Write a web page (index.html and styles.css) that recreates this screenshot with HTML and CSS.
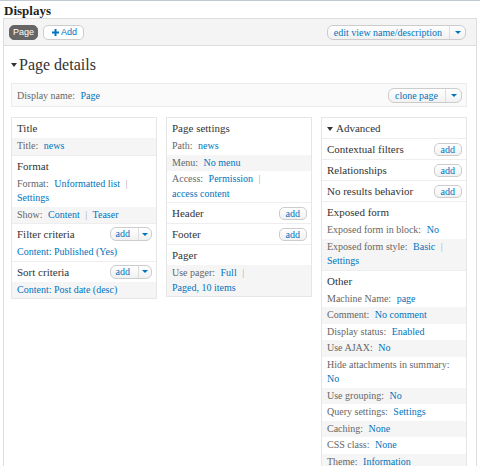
FILE: index.html
```html
<!DOCTYPE html>
<html lang="en">

<head>
    <meta charset="UTF-8">
    <title>Displays</title>
    <link rel="stylesheet" href="styles.css">
</head>

<body>

    <div id="page">
        <h2 class="displays-title">Displays</h2>

        <div class="displays">
            <!-- display tabs -->
            <div class="tabs">
                <a class="tab active" href="javascript:void(0)">Page</a>
                <a class="tab add-display" href="javascript:void(0)">
                    <svg width="7" height="7" viewBox="0 0 7 7"><path d="M2.5 0h2v2.5H7v2H4.5V7h-2V4.5H0v-2h2.5z" fill="#0074bd" /></svg>Add
                </a>
                <div class="dropbutton tabs-menu">
                    <a href="javascript:void(0)">edit view name/description</a>
                    <span class="toggle"><i class="caret"></i></span>
                </div>
            </div>

            <div class="display-body">
                <h3 class="details-title"><i class="arrow"></i>Page details</h3>

                <div class="display-name">
                    <span><span class="label">Display name:</span> <a href="javascript:void(0)">Page</a></span>
                    <div class="dropbutton">
                        <a href="javascript:void(0)">clone page</a>
                        <span class="toggle"><i class="caret"></i></span>
                    </div>
                </div>

                <div class="columns">
                    <!-- first column -->
                    <div class="column">
                        <div class="section">
                            <div class="section-head">Title</div>
                            <div class="row alt"><span class="label">Title:</span> <a href="javascript:void(0)">news</a></div>
                        </div>
                        <div class="section">
                            <div class="section-head">Format</div>
                            <div class="row"><span class="label">Format:</span> <a href="javascript:void(0)">Unformatted list</a> <span class="sep">|</span> <a href="javascript:void(0)">Settings</a></div>
                            <div class="row alt"><span class="label">Show:</span> <a href="javascript:void(0)">Content</a> <span class="sep">|</span> <a href="javascript:void(0)">Teaser</a></div>
                        </div>
                        <div class="section">
                            <div class="section-head">Filter criteria
                                <div class="dropbutton small">
                                    <a href="javascript:void(0)">add</a>
                                    <span class="toggle"><i class="caret"></i></span>
                                </div>
                            </div>
                            <div class="row"><a href="javascript:void(0)">Content: Published (Yes)</a></div>
                        </div>
                        <div class="section">
                            <div class="section-head">Sort criteria
                                <div class="dropbutton small">
                                    <a href="javascript:void(0)">add</a>
                                    <span class="toggle"><i class="caret"></i></span>
                                </div>
                            </div>
                            <div class="row alt"><a href="javascript:void(0)">Content: Post date (desc)</a></div>
                        </div>
                    </div>

                    <!-- second column -->
                    <div class="column">
                        <div class="section">
                            <div class="section-head">Page settings</div>
                            <div class="row"><span class="label">Path:</span> <a href="javascript:void(0)">news</a></div>
                            <div class="row alt"><span class="label">Menu:</span> <a href="javascript:void(0)">No menu</a></div>
                            <div class="row"><span class="label">Access:</span> <a href="javascript:void(0)">Permission</a> <span class="sep">|</span> <a href="javascript:void(0)">access content</a></div>
                        </div>
                        <div class="section">
                            <div class="section-head">Header <a class="add-btn" href="javascript:void(0)">add</a></div>
                        </div>
                        <div class="section">
                            <div class="section-head">Footer <a class="add-btn" href="javascript:void(0)">add</a></div>
                        </div>
                        <div class="section">
                            <div class="section-head">Pager</div>
                            <div class="row alt"><span class="label">Use pager:</span> <a href="javascript:void(0)">Full</a> <span class="sep">|</span> <a href="javascript:void(0)">Paged, 10 items</a></div>
                        </div>
                    </div>

                    <!-- third column -->
                    <div class="column">
                        <div class="section">
                            <div class="section-head advanced"><span><i class="arrow small"></i>Advanced</span></div>
                        </div>
                        <div class="section">
                            <div class="section-head">Contextual filters <a class="add-btn" href="javascript:void(0)">add</a></div>
                        </div>
                        <div class="section">
                            <div class="section-head">Relationships <a class="add-btn" href="javascript:void(0)">add</a></div>
                        </div>
                        <div class="section">
                            <div class="section-head">No results behavior <a class="add-btn" href="javascript:void(0)">add</a></div>
                        </div>
                        <div class="section">
                            <div class="section-head">Exposed form</div>
                            <div class="row"><span class="label">Exposed form in block:</span> <a href="javascript:void(0)">No</a></div>
                            <div class="row alt"><span class="label">Exposed form style:</span> <a href="javascript:void(0)">Basic</a> <span class="sep">|</span> <a href="javascript:void(0)">Settings</a></div>
                        </div>
                        <div class="section">
                            <div class="section-head">Other</div>
                            <div class="row"><span class="label">Machine Name:</span> <a href="javascript:void(0)">page</a></div>
                            <div class="row alt"><span class="label">Comment:</span> <a href="javascript:void(0)">No comment</a></div>
                            <div class="row"><span class="label">Display status:</span> <a href="javascript:void(0)">Enabled</a></div>
                            <div class="row alt"><span class="label">Use AJAX:</span> <a href="javascript:void(0)">No</a></div>
                            <div class="row"><span class="label">Hide attachments in summary:</span> <a href="javascript:void(0)">No</a></div>
                            <div class="row alt"><span class="label">Use grouping:</span> <a href="javascript:void(0)">No</a></div>
                            <div class="row"><span class="label">Query settings:</span> <a href="javascript:void(0)">Settings</a></div>
                            <div class="row alt"><span class="label">Caching:</span> <a href="javascript:void(0)">None</a></div>
                            <div class="row"><span class="label">CSS class:</span> <a href="javascript:void(0)">None</a></div>
                            <div class="row alt"><span class="label">Theme:</span> <a href="javascript:void(0)">Information</a></div>
                        </div>
                    </div>
                </div>
            </div>
        </div>
    </div>

</body>

</html>
```

FILE: styles.css
```css
* {
    margin: 0;
    padding: 0;
    box-sizing: border-box;
}

html,
body {
    overflow: hidden;
}

body {
    font-family: "Liberation Serif", "Times New Roman", serif;
    font-size: 10px;
    color: #666;
    background: #fff;
}

a {
    color: #0074bd;
    text-decoration: none;
}

#page {
    border-top: 1px solid #c4cad4;
}

.displays-title {
    height: 17px;
    padding: 2px 0 0 4px;
    font-size: 13px;
    line-height: 16px;
    font-weight: bold;
    color: #222;
}

.displays {
    margin: 0 3px;
    min-height: 500px;
    border: 1px solid #ddd;
}

/* tabs bar */
.tabs {
    display: flex;
    align-items: center;
    gap: 5px;
    height: 27px;
    padding: 0 10px 0 5px;
    background: #f4f4f4;
    border-bottom: 1px solid #ddd;
}

.tab {
    display: inline-flex;
    align-items: center;
    height: 15px;
    padding: 0 3px;
    font-family: "Liberation Sans", Arial, sans-serif;
    font-size: 9px;
    border: 1px solid #ccc;
    border-radius: 5px;
    background: #fff;
}

.tab.active {
    color: #fff;
    background: #666;
    border-color: #666;
}

.add-display {
    gap: 2px;
    padding: 0 6px 0 8px;
}

.tabs-menu {
    margin-left: auto;
}

/* split buttons */
.dropbutton {
    display: inline-flex;
    align-items: stretch;
    height: 15px;
    border: 1px solid #ccc;
    border-radius: 6px;
    background: linear-gradient(#fff, #f1f1f1);
    line-height: 13px;
    font-size: 10px;
}

.dropbutton a {
    padding: 0 7px 0 6px;
}

.dropbutton .toggle {
    display: flex;
    align-items: center;
    justify-content: center;
    width: 16px;
    border-left: 1px solid #ddd;
}

.dropbutton.small {
    height: 14px;
    line-height: 12px;
}

.dropbutton.small a {
    padding: 0 8px 0 5px;
}

.dropbutton.small .toggle {
    width: 13px;
}

.caret {
    display: block;
    border-left: 3px solid transparent;
    border-right: 3px solid transparent;
    border-top: 3px solid #0074bd;
}

.add-btn {
    height: 13px;
    padding: 0 6px;
    line-height: 11px;
    font-size: 10px;
    border: 1px solid #ccc;
    border-radius: 5px;
    background: linear-gradient(#fff, #f1f1f1);
}

/* display body */
.display-body {
    padding: 0 9px 10px 7px;
}

.details-title {
    display: flex;
    align-items: center;
    margin: 9px 0 8px;
    font-size: 16px;
    line-height: 20px;
    font-weight: normal;
    color: #333;
}

.arrow {
    display: block;
    margin-right: 2px;
    border-left: 3px solid transparent;
    border-right: 3px solid transparent;
    border-top: 4px solid #333;
}

.arrow.small {
    display: inline-block;
    margin: 0 3px 1px 0;
    vertical-align: middle;
}

.display-name {
    display: flex;
    align-items: center;
    justify-content: space-between;
    height: 24px;
    padding: 0 4px 0 5px;
    background: #fafafa;
    border: 1px solid #ececec;
}

.label {
    margin-right: 3px;
}

.sep {
    margin: 0 3px;
    color: #aaa;
}

/* columns */
.columns {
    display: grid;
    grid-template-columns: repeat(3, 1fr);
    column-gap: 9px;
    align-items: start;
    margin-top: 10px;
}

.column {
    border: 1px solid #e6e6e6;
    background: #fff;
}

.section {
    border-bottom: 1px solid #eee;
}

.section:last-child {
    border-bottom: none;
}

.section-head {
    display: flex;
    align-items: center;
    justify-content: space-between;
    height: 20px;
    padding: 0 4px 0 5px;
    font-size: 11px;
    color: #333;
}

.row {
    padding: 1px 5px;
    line-height: 14.5px;
}

.row a {
    white-space: nowrap;
}

.row.alt {
    background: #f5f5f5;
}
```
